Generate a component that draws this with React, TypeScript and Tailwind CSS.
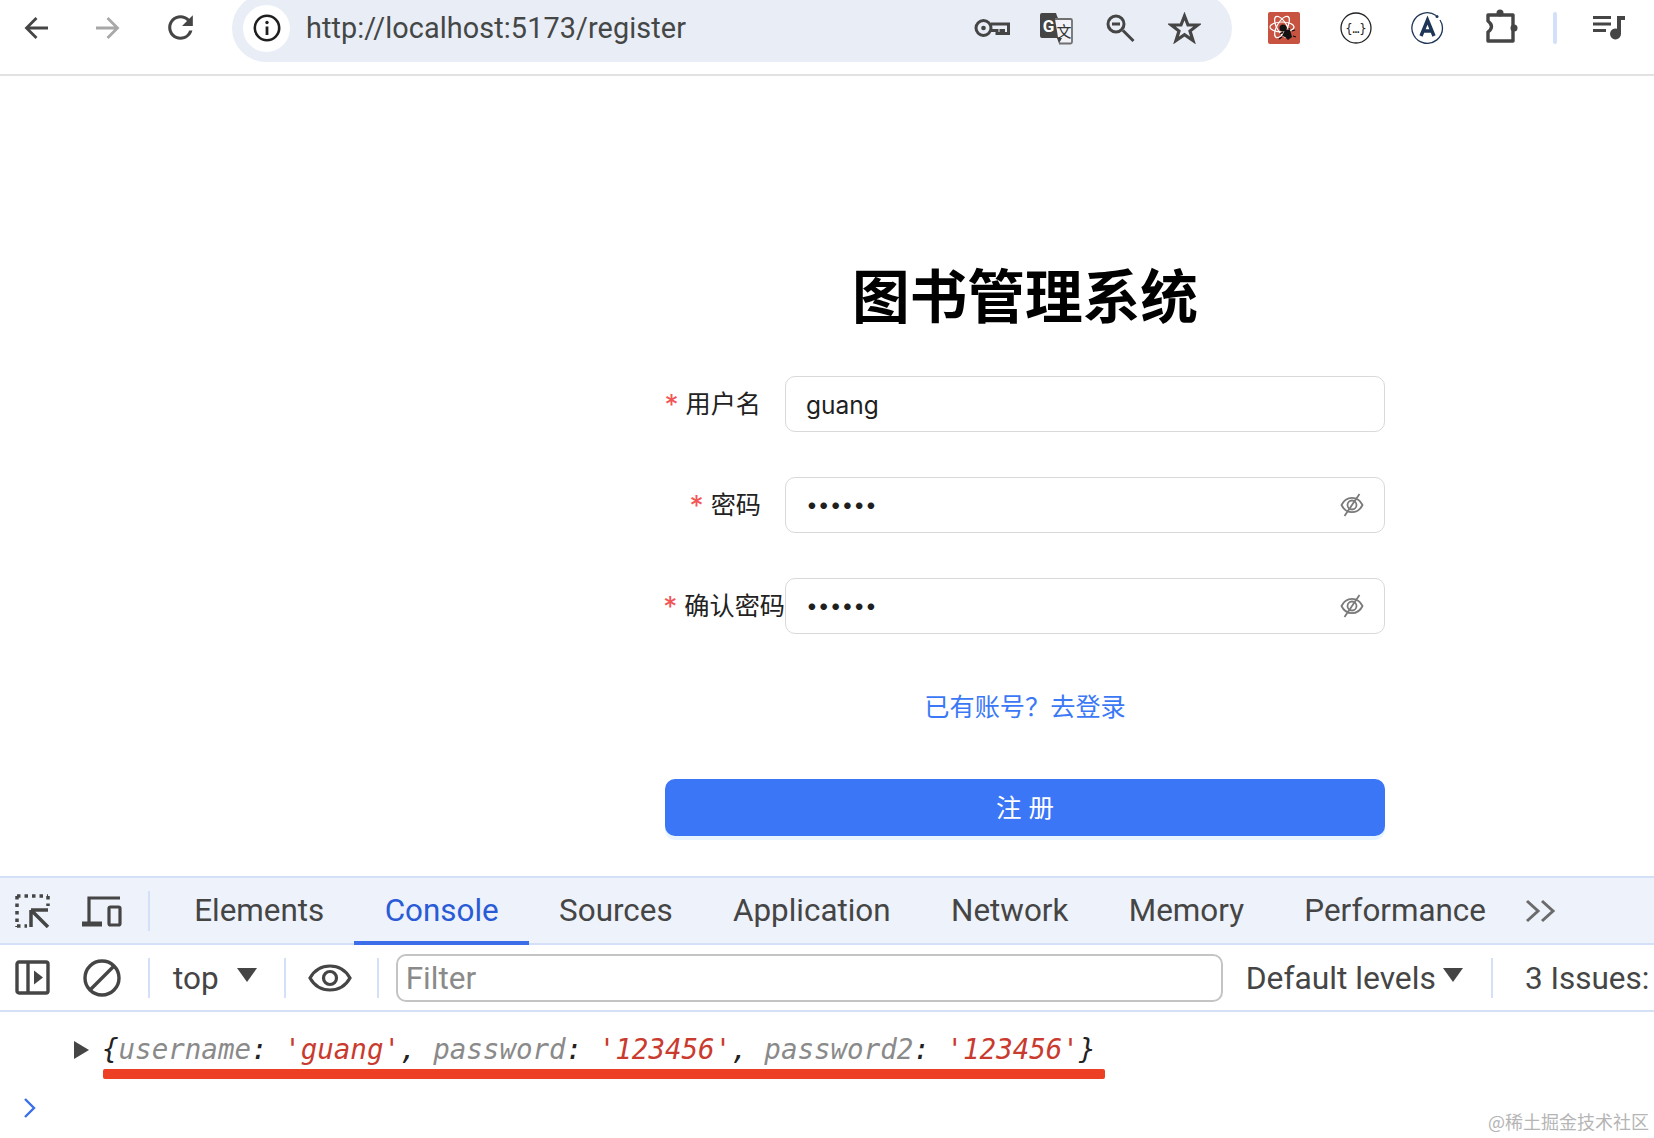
const cjk = "font-['Inter','Noto_Sans_CJK_SC',sans-serif]";
const ui = "font-['Roboto','Noto_Sans_CJK_SC',sans-serif]";

function BackArrow({ className }: { className: string }) {
  return (
    <svg width="25" height="24" viewBox="0 0 25 24" fill="none" className={className}>
      <path d="M24 12H3M12.5 2 2.5 12l10 10" stroke="currentColor" strokeWidth="2.8" />
    </svg>
  );
}

function Reload() {
  return (
    <svg width="37" height="37" viewBox="0 0 24 24" className="text-[#454545] mt-[9px] ml-[42px]" fill="currentColor">
      <path d="M17.65 6.35A7.958 7.958 0 0 0 12 4c-4.42 0-7.99 3.58-7.99 8s3.57 8 7.99 8c3.73 0 6.84-2.55 7.73-6h-2.08A5.99 5.99 0 0 1 12 18c-3.31 0-6-2.69-6-6s2.69-6 6-6c1.66 0 3.14.69 4.22 1.78L13 11h7V4l-2.35 2.35z" />
    </svg>
  );
}

function OmniboxIcons() {
  return (
    <div className="ml-auto flex items-center text-[#454545]">
      {/* key */}
      <svg width="36" height="20" viewBox="0 0 36 20" fill="none" stroke="currentColor" strokeWidth="3">
        <circle cx="9.5" cy="10" r="7.5" />
        <circle cx="9.5" cy="10" r="1.6" fill="currentColor" strokeWidth="1.5" />
        <path d="M17 6h17.5v9.5h-5v-3h-2.5v3h-4v-3h-6" />
      </svg>
      {/* translate */}
      <svg width="33" height="33" viewBox="0 0 33 33" className="ml-[30px]">
        <path d="M2 1h14l1 3 1 2 7 20H2a2 2 0 0 1-2-2V3a2 2 0 0 1 2-2z" fill="currentColor" />
        <path d="M15 7h15.5a1.5 1.5 0 0 1 1.5 1.500V30a1.500 1.500 0 0 1-1.500 1.500H19" fill="#f1f3f8" stroke="#707070" strokeWidth="1.800" />
        <path d="M19 31.500 22 26H17z" fill="currentColor" />
        <text x="8.500" y="20" textAnchor="middle" fontSize="17" fontWeight="700" fill="#fff" fontFamily="Roboto, sans-serif">G</text>
        <text x="24" y="25" textAnchor="middle" fontSize="15" fill="#333" fontFamily="'Noto Sans CJK SC', sans-serif">文</text>
      </svg>
      {/* zoom out */}
      <svg width="29" height="29" viewBox="0 0 29 29" fill="none" stroke="currentColor" strokeWidth="3" className="ml-[33px]">
        <circle cx="10" cy="10" r="8" />
        <path d="M17 16.500 27.500 27M6 10h8" />
      </svg>
      {/* star */}
      <svg width="33" height="32" viewBox="0 0 33 32" fill="none" stroke="currentColor" strokeWidth="3.200" className="ml-[33px]">
        <path d="M16.500 4 20 13h9.800l-7.800 6 3 9.500-8.500-5.800L8 28.500l3-9.500-7.800-6H13z" />
      </svg>
    </div>
  );
}

function ReactDevIcon() {
  return (
    <div className="ml-[36px] w-[32px] h-[32px] rounded-[2px] bg-[#c75340]">
      <svg width="32" height="32" viewBox="0 0 32 32" fill="none">
        <g stroke="#fff" strokeWidth="1.200">
          <ellipse cx="14" cy="15" rx="12" ry="5" />
          <ellipse cx="14" cy="15" rx="12" ry="5" transform="rotate(60 14 15)" />
          <ellipse cx="14" cy="15" rx="12" ry="5" transform="rotate(120 14 15)" />
        </g>
        <circle cx="15" cy="16" r="3.500" fill="#111" />
        <path d="M17 18h5l2 7-4 3-3-3-3-1z" fill="#111" />
        <path d="M15 20l-3 2M14 25l-3 2M24 19l3-1M25 24l3 1M21 16v3M18 15v3" stroke="#111" strokeWidth="1.300" />
      </svg>
    </div>
  );
}

function JsonIcon() {
  return (
    <svg width="32" height="32" viewBox="0 0 32 32" fill="none" className="ml-[40px]">
      <circle cx="16" cy="16" r="15" stroke="#222" strokeWidth="1.300" />
      <text x="16" y="20.500" textAnchor="middle" fontSize="11.500" fill="#222" fontFamily="'DejaVu Sans Mono', monospace">{"{…}"}</text>
    </svg>
  );
}

function ArcIcon() {
  return (
    <svg width="33" height="32" viewBox="0 0 33 32" fill="none" className="ml-[39px]">
      <path d="M25 3.500A15.300 15.300 0 1 0 31.500 16 15 15 0 0 0 29 8" stroke="#1d3557" strokeWidth="1.300" />
      <circle cx="26" cy="4.500" r="1.500" fill="#1d3557" />
      <path d="M10 24 16.500 8 23 24M12.500 19h8" stroke="#1d3557" strokeWidth="3.400" />
    </svg>
  );
}

function Puzzle() {
  return (
    <svg width="33" height="34" viewBox="0 0 33 34" fill="none" className="ml-[41px] -mt-[4px]">
      <path d="M3 6H28V32H3V23Q10 17.500 3 12Z" stroke="#454545" strokeWidth="3.400" strokeLinejoin="round" />
      <circle cx="15" cy="4" r="3.500" fill="#454545" />
      <circle cx="29" cy="19" r="3.500" fill="#454545" />
    </svg>
  );
}

function MediaIcon() {
  return (
    <svg width="32" height="26" viewBox="0 0 32 26" fill="#454545" className="ml-[36px]">
      <path d="M0 1h18v3H0zM0 7.500h18v3H0zM0 14h13v3H0z" />
      <path d="M24 1h8v4h-4v14a5.500 5.500 0 1 1-4-5.300z" />
    </svg>
  );
}

function BrowserBar() {
  return (
    <div className="flex items-start h-[76px] border-b-2 border-[#e2e2e2] overflow-hidden">
      <BackArrow className="text-[#454545] mt-[16px] ml-[24px]" />
      <div className="ml-[46px] mt-[16px] rotate-180 text-[#a8a8a8]">
        <BackArrow className="" />
      </div>
      <Reload />
      <div className={`ml-[33px] -mt-[6px] w-[1000px] h-[68px] rounded-[34px] bg-[#e9edf6] flex items-center pl-[11px] pr-[31px] ${ui}`}>
        <div className="w-[47px] h-[47px] rounded-full bg-white flex items-center justify-center">
          <svg width="28" height="28" viewBox="0 0 28 28" fill="none" stroke="#1f1f1f">
            <circle cx="14" cy="14" r="12.200" strokeWidth="2.600" />
            <path d="M14 12.500V21" strokeWidth="2.800" />
            <circle cx="14" cy="8.500" r="1.700" fill="#1f1f1f" strokeWidth="0" />
          </svg>
        </div>
        <span className="ml-[16px] pt-[2px] text-[28.8px] text-[#444746] tracking-[0.1px]">http://localhost:5173/register</span>
        <OmniboxIcons />
      </div>
      <div className="flex items-center h-[56px]">
        <ReactDevIcon />
        <JsonIcon />
        <ArcIcon />
        <Puzzle />
        <div className="ml-[35px] w-[4px] h-[32px] rounded-full bg-[#d3e0f9]" />
        <MediaIcon />
      </div>
    </div>
  );
}

function EyeOff() {
  return (
    <svg width="24" height="24" viewBox="0 0 24 24" fill="none" stroke="#7a7a7a" strokeWidth="1.800" className="shrink-0">
      <path d="M1.500 12C6 2.500 18 2.500 22.500 12 18 21.500 6 21.500 1.500 12z" />
      <circle cx="12" cy="12" r="4.500" />
      <path d="M19.500 1 4.500 23" />
    </svg>
  );
}

function Field({ label, value, password, flush }: { label: string; value: string; password?: boolean; flush?: boolean }) {
  return (
    <div className="flex h-[56px] mb-[45px]">
      <label className={`w-[120px] shrink-0 pt-[2px] flex items-center justify-end text-[25.2px] text-[#222] whitespace-nowrap ${flush ? "" : "pr-[24px]"}`}>
        <span className="text-[#f25555] text-[28px] mr-[7px]">*</span>
        {label}
      </label>
      <div className="flex-1 flex items-center border border-[#d9d9d9] rounded-[10px] pl-[20px] pr-[20px]">
        <input
          readOnly
          type={password ? "password" : "text"}
          value={value}
          className={`flex-1 min-w-0 outline-none bg-transparent text-[#1f1f1f] ${password ? "text-[21px]" : "text-[24.5px] pt-[2px]"}`}
        />
        {password && <EyeOff />}
      </div>
    </div>
  );
}

function RegisterForm() {
  return (
    <div className={`ml-[665px] w-[720px] pt-[181px] ${cjk}`}>
      <h1 className="h-[80px] leading-[80px] text-center text-[57.7px] font-bold text-black mb-[39px]">图书管理系统</h1>
      <Field label="用户名" value="guang" />
      <Field label="密码" value="123456" password />
      <Field label="确认密码" value="123456" password flush />
      <div className="h-[34px] leading-[34px] mt-[56px] text-center text-[25.2px] text-[#3b78f6]">已有账号？去登录</div>
      <button className="block w-full h-[57px] mt-[55px] pt-[2px] rounded-[10px] bg-[#3b76f7] text-white text-[25.5px] shadow-[0_4px_0_#e8f4ff]">注 册</button>
    </div>
  );
}

const tabs = ["Elements", "Console", "Sources", "Application", "Network", "Memory", "Performance"];

function DevSep({ className = "" }: { className?: string }) {
  return <div className={`w-[2px] h-[40px] bg-[#d3e0f7] shrink-0 ${className}`} />;
}

function TabBar() {
  return (
    <div className="flex items-center h-[67px] bg-[#eef2fa] border-b-2 border-[#d3e0f7] text-[#454545]">
      <svg width="35" height="35" viewBox="0 0 35 35" fill="none" stroke="currentColor" className="ml-[15px] shrink-0">
        <path d="M2 3h31M2 3v31M2 33h10M33 3v10" strokeWidth="3.500" strokeDasharray="3.500 4" />
        <path d="M16 17h17M16 17v17M17 18l16 16" strokeWidth="3.500" />
      </svg>
      <svg width="40" height="32" viewBox="0 0 40 32" fill="none" stroke="currentColor" strokeWidth="3.200" className="ml-[32px] shrink-0">
        <path d="M38 3H7v26" />
        <path d="M0 29h20" strokeWidth="5" />
        <rect x="27" y="12" width="11" height="18" rx="1.500" />
      </svg>
      <DevSep className="ml-[26px]" />
      <div className="flex self-stretch ml-[14px]">
        {tabs.map((t) => (
          <div
            key={t}
            className={`flex items-center px-[30.2px] pt-[2px] -mb-[2px] border-b-4 text-[31.4px] ${t === "Console" ? "border-[#3b6ee8] text-[#2a5bd7]" : "border-transparent"}`}
          >
            {t}
          </div>
        ))}
      </div>
      <svg width="31" height="24" viewBox="0 0 31 24" fill="none" stroke="#6b6b6b" strokeWidth="3" className="ml-[9px]">
        <path d="M2 2l11 10L2 22M17 2l11 10-11 10" />
      </svg>
    </div>
  );
}

function Triangle({ className }: { className: string }) {
  return <span className={`w-0 h-0 border-l-[10px] border-r-[10px] border-t-[14px] border-l-transparent border-r-transparent border-t-[#454545] ${className}`} />;
}

function FilterBar() {
  return (
    <div className="flex items-center h-[67px] border-b-2 border-[#d3e0f7] text-[#454545] text-[31.5px] whitespace-nowrap overflow-hidden">
      <svg width="35" height="35" viewBox="0 0 35 35" fill="none" stroke="currentColor" strokeWidth="3.400" className="ml-[15px] shrink-0">
        <rect x="2" y="2" width="31" height="31" rx="2" />
        <path d="M13 2v31" />
        <path d="M19 10.500 28 17.500l-9 7z" fill="currentColor" stroke="none" />
      </svg>
      <svg width="38" height="38" viewBox="0 0 38 38" fill="none" stroke="currentColor" strokeWidth="3.400" className="ml-[33px] shrink-0">
        <circle cx="19" cy="19" r="17" />
        <path d="M7 31 31 7" />
      </svg>
      <DevSep className="ml-[27px]" />
      <span className="ml-[23px] pt-[2px]">top</span>
      <Triangle className="ml-[18px] -mt-[6px]" />
      <DevSep className="ml-[27px]" />
      <svg width="44" height="30" viewBox="0 0 44 30" fill="none" stroke="currentColor" strokeWidth="3.200" className="ml-[22px] shrink-0">
        <path d="M2 15C11-1 33-1 42 15 33 31 11 31 2 15z" />
        <circle cx="22" cy="15" r="6.500" />
      </svg>
      <DevSep className="ml-[25px]" />
      <div className="ml-[17px] w-[827px] h-[48px] shrink-0 border-2 border-[#c4c4c4] rounded-[10px] pl-[8px] pt-[2px] flex items-center text-[#8a8a8a]">Filter</div>
      <span className="ml-[23px] pt-[2px] text-[31.8px]">Default levels</span>
      <Triangle className="ml-[7px] -mt-[6px]" />
      <DevSep className="ml-[28px]" />
      <span className="ml-[32px] pt-[2px]">3 Issues:</span>
    </div>
  );
}

function ConsoleOutput() {
  return (
    <div className="relative flex-1 bg-white">
      <div className="flex items-center pl-[74px] pt-[19px] h-[57px]">
        <span className="w-0 h-0 border-y-[9px] border-l-[15px] border-y-transparent border-l-[#454545]" />
        <span className="ml-[13px] font-['DejaVu_Sans_Mono',monospace] italic text-[27.5px] text-[#222] whitespace-pre leading-none">
          {"{"}
          <span className="text-[#8a8a8a]">username</span>
          {": "}
          <span className="text-[#c93b2e]">'guang'</span>
          {", "}
          <span className="text-[#8a8a8a]">password</span>
          {": "}
          <span className="text-[#c93b2e]">'123456'</span>
          {", "}
          <span className="text-[#8a8a8a]">password2</span>
          {": "}
          <span className="text-[#c93b2e]">'123456'</span>
          {"}"}
        </span>
      </div>
      <div className="ml-[103px] w-[1002px] h-[10px] rounded-[2px] bg-[#ec3f24]" />
      <svg width="14" height="20" viewBox="0 0 14 20" fill="none" stroke="#3b6ee8" strokeWidth="2.400" className="ml-[23px] mt-[19px]">
        <path d="M2 1l9 9-9 9" />
      </svg>
      <span className="absolute right-[5px] bottom-[6px] font-['Noto_Sans_CJK_SC',sans-serif] text-[18px] leading-[22px] text-[#b5b5b5]">@稀土掘金技术社区</span>
    </div>
  );
}

export default function App() {
  return (
    <div className={`w-[1654px] h-[1138px] overflow-hidden bg-white flex flex-col ${ui}`}>
      <BrowserBar />
      <div className="h-[800px] shrink-0">
        <RegisterForm />
      </div>
      <div className="flex-1 flex flex-col border-t-2 border-[#d3e0f7]">
        <TabBar />
        <FilterBar />
        <ConsoleOutput />
      </div>
    </div>
  );
}
